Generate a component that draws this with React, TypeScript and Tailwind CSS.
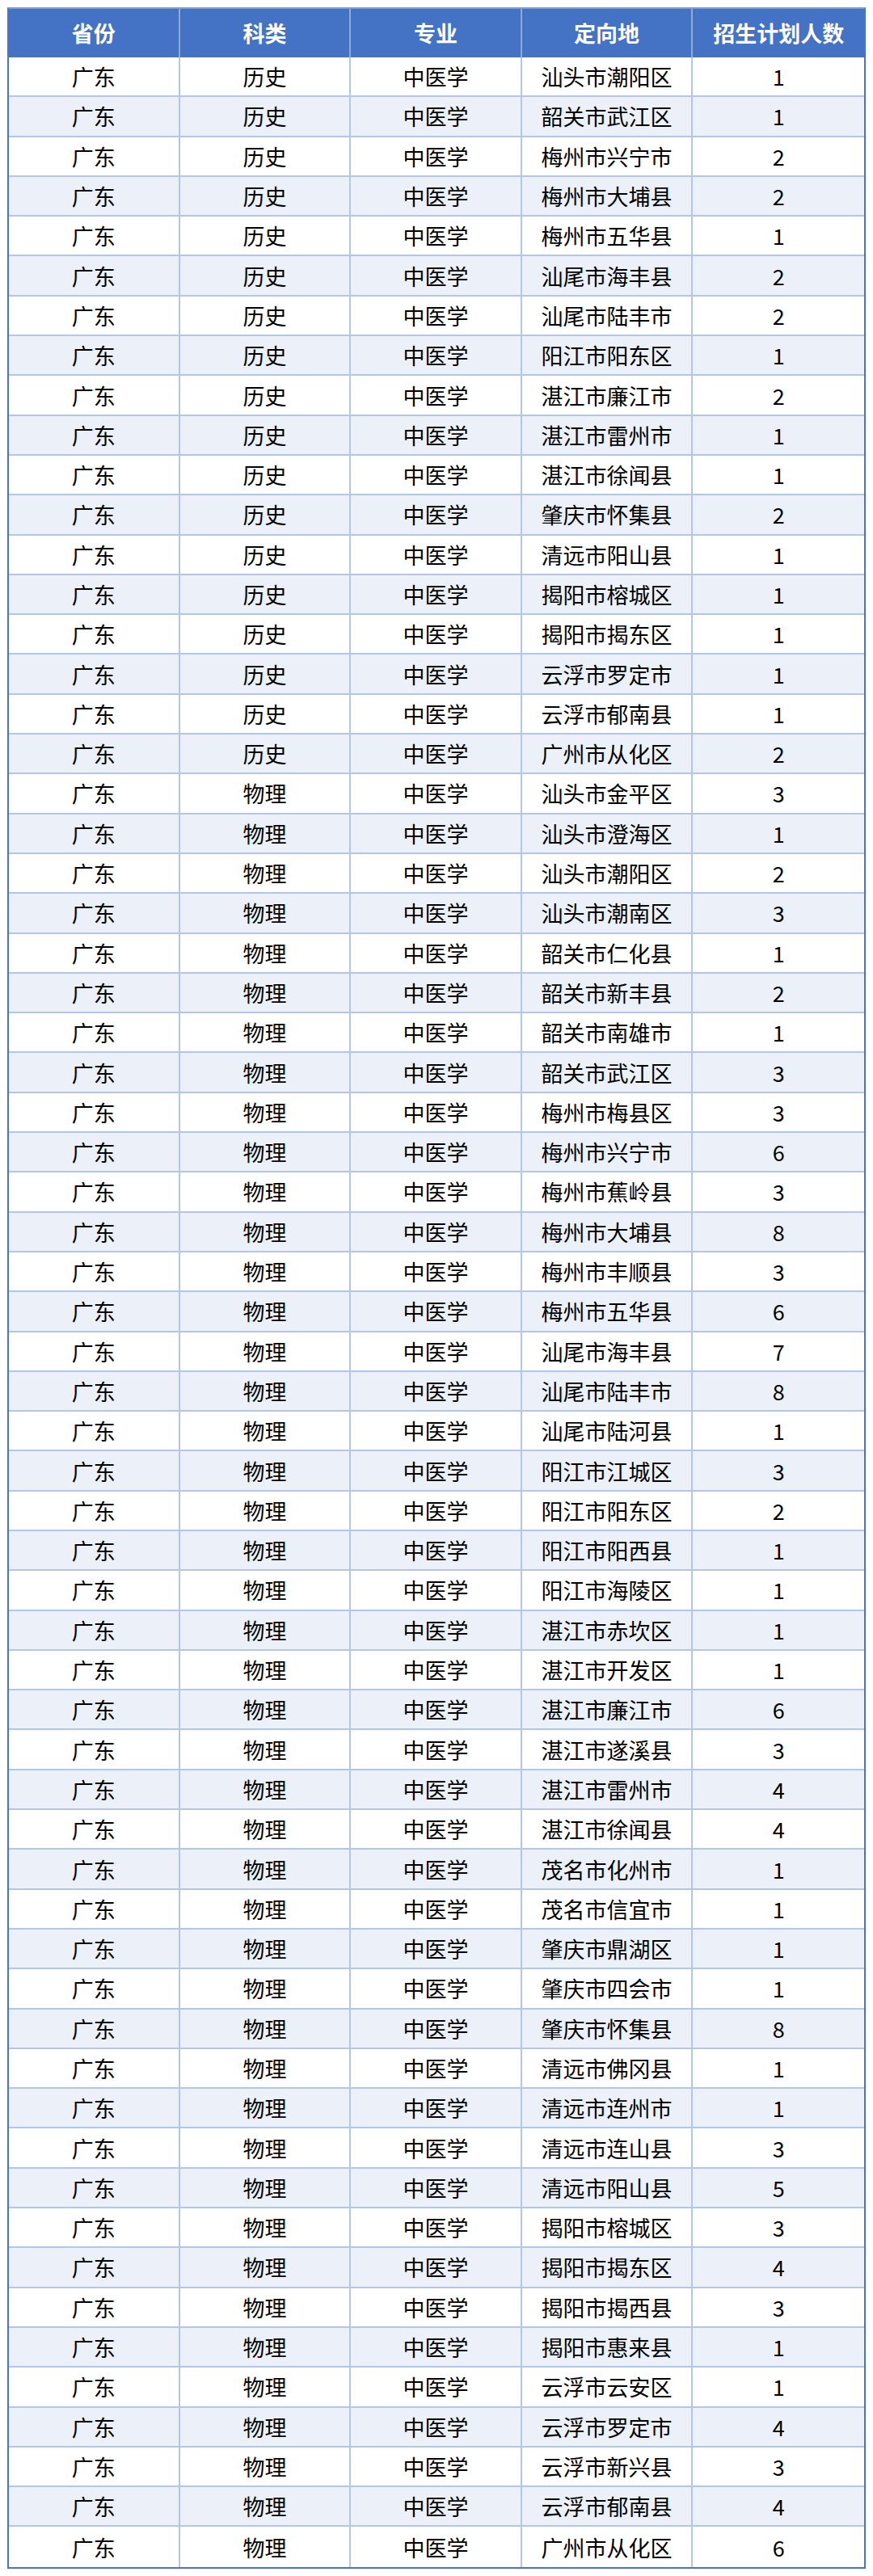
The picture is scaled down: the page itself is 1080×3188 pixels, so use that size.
const history: [string, number][] = [
  ['汕头市潮阳区', 1],
  ['韶关市武江区', 1],
  ['梅州市兴宁市', 2],
  ['梅州市大埔县', 2],
  ['梅州市五华县', 1],
  ['汕尾市海丰县', 2],
  ['汕尾市陆丰市', 2],
  ['阳江市阳东区', 1],
  ['湛江市廉江市', 2],
  ['湛江市雷州市', 1],
  ['湛江市徐闻县', 1],
  ['肇庆市怀集县', 2],
  ['清远市阳山县', 1],
  ['揭阳市榕城区', 1],
  ['揭阳市揭东区', 1],
  ['云浮市罗定市', 1],
  ['云浮市郁南县', 1],
  ['广州市从化区', 2],
];

const physics: [string, number][] = [
  ['汕头市金平区', 3],
  ['汕头市澄海区', 1],
  ['汕头市潮阳区', 2],
  ['汕头市潮南区', 3],
  ['韶关市仁化县', 1],
  ['韶关市新丰县', 2],
  ['韶关市南雄市', 1],
  ['韶关市武江区', 3],
  ['梅州市梅县区', 3],
  ['梅州市兴宁市', 6],
  ['梅州市蕉岭县', 3],
  ['梅州市大埔县', 8],
  ['梅州市丰顺县', 3],
  ['梅州市五华县', 6],
  ['汕尾市海丰县', 7],
  ['汕尾市陆丰市', 8],
  ['汕尾市陆河县', 1],
  ['阳江市江城区', 3],
  ['阳江市阳东区', 2],
  ['阳江市阳西县', 1],
  ['阳江市海陵区', 1],
  ['湛江市赤坎区', 1],
  ['湛江市开发区', 1],
  ['湛江市廉江市', 6],
  ['湛江市遂溪县', 3],
  ['湛江市雷州市', 4],
  ['湛江市徐闻县', 4],
  ['茂名市化州市', 1],
  ['茂名市信宜市', 1],
  ['肇庆市鼎湖区', 1],
  ['肇庆市四会市', 1],
  ['肇庆市怀集县', 8],
  ['清远市佛冈县', 1],
  ['清远市连州市', 1],
  ['清远市连山县', 3],
  ['清远市阳山县', 5],
  ['揭阳市榕城区', 3],
  ['揭阳市揭东区', 4],
  ['揭阳市揭西县', 3],
  ['揭阳市惠来县', 1],
  ['云浮市云安区', 1],
  ['云浮市罗定市', 4],
  ['云浮市新兴县', 3],
  ['云浮市郁南县', 4],
  ['广州市从化区', 6],
];

const rows = [
  ...history.map(([place, n]) => ['广东', '历史', '中医学', place, String(n)]),
  ...physics.map(([place, n]) => ['广东', '物理', '中医学', place, String(n)]),
];

const headers = ['省份', '科类', '专业', '定向地', '招生计划人数'];

export default function App() {
  return (
    <div className="bg-white min-h-[3188px] pt-[9px] pl-[9px] font-['Microsoft_YaHei','Noto_Sans_CJK_SC',sans-serif]">
      <div className="w-[1062px] border-2 border-[#4a74c8] border-t-[#7f9ddb]">
        <div className="grid grid-cols-5 h-[60px] bg-[#4472c4] text-white text-[27px] font-bold">
          {headers.map((h, i) => (
            <div
              key={h}
              className={`flex items-center justify-center ${i < 4 ? 'border-r-2 border-[#8eaadb]' : ''}`}
            >
              {h}
            </div>
          ))}
        </div>
        {rows.map((r, idx) => (
          <div
            key={idx}
            className={`grid grid-cols-5 h-[49.3px] text-[27px] text-black ${idx % 2 === 1 ? 'bg-[#ebf0f9]' : 'bg-white'} ${idx < rows.length - 1 ? 'border-b-2 border-[#b4c6e7]' : ''}`}
          >
            {r.map((c, i) => (
              <div
                key={i}
                className={`flex items-center justify-center leading-none ${i < 4 ? 'border-r-2 border-[#b4c6e7]' : ''}`}
              >
                {c}
              </div>
            ))}
          </div>
        ))}
      </div>
    </div>
  );
}
